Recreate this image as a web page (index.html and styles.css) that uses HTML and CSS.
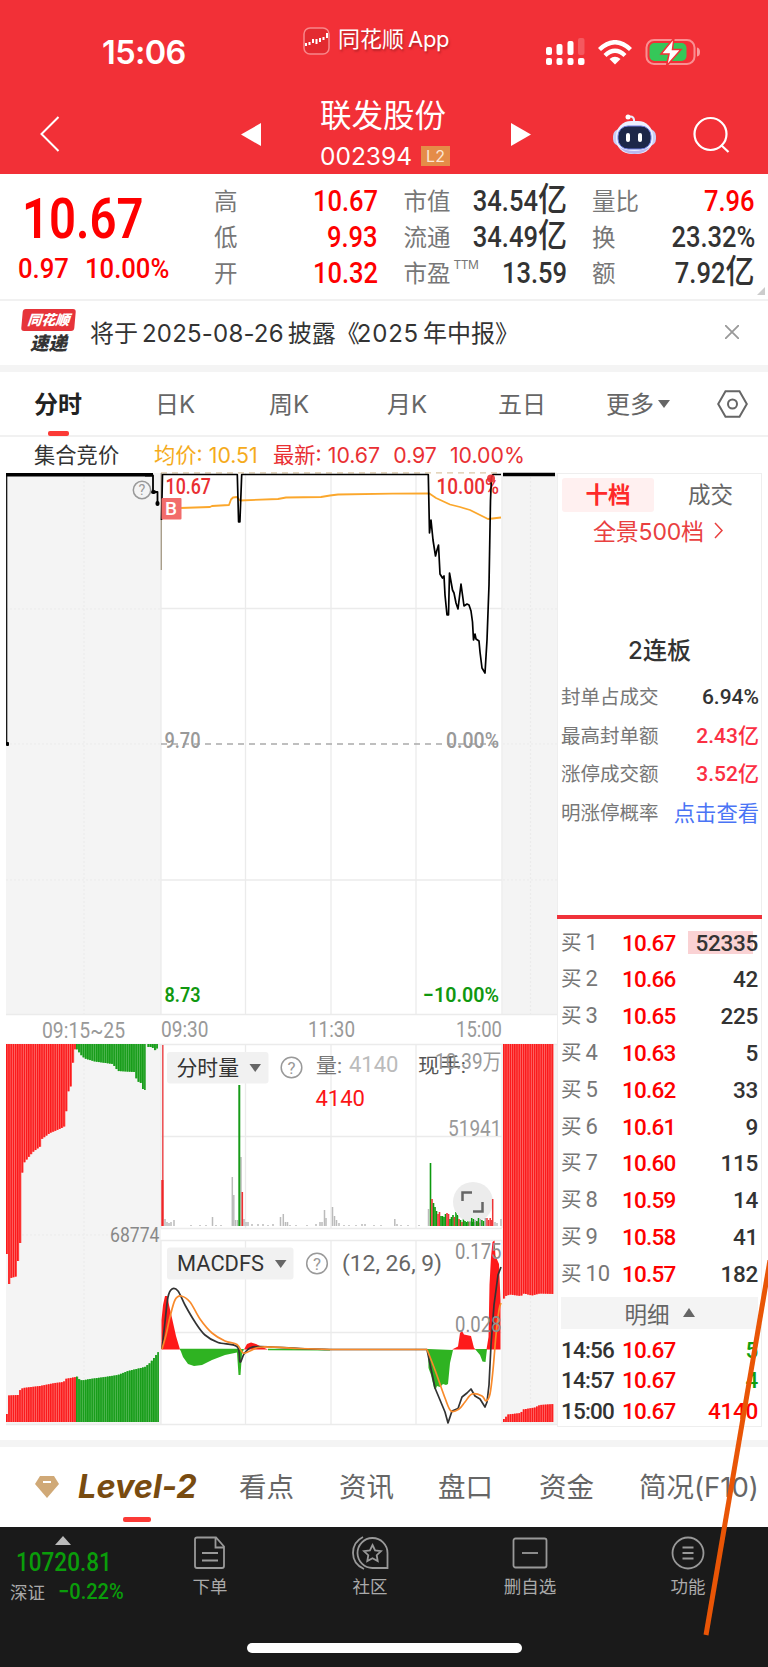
FILE: index.html
```html
<!DOCTYPE html>
<html lang="zh-CN">
<head>
    <meta charset="UTF-8">
    <meta name="viewport" content="width=device-width, initial-scale=1.0">
    <title>联发股份 002394</title>
    <link rel="stylesheet" href="styles.css">
</head>
<body>

    <header class="header">
        <div class="status-bar">
            <span class="time">15:06</span>
            <div class="brand">
                <svg width="27" height="28" viewBox="0 0 27 28"><rect x="1" y="1" width="25" height="26" rx="6" fill="#e32a30" stroke="#f8878a" stroke-width="1.5"/><path d="M3 19v-3M6.500 18v-3M10 16v-4M13.500 12v5M17 15v-4M20.500 13v-3M24 11V6" stroke="#fff" stroke-width="2" fill="none"/></svg>
                <span>同花顺<em>App</em></span>
            </div>
            <div class="status-icons">
                <svg width="39" height="28" viewBox="0 0 39 28" fill="#fff"><rect x="0" y="9" width="6" height="8" rx="2"/><rect x="10.5" y="6" width="6" height="11" rx="2"/><rect x="21.5" y="3" width="6" height="14" rx="2"/><rect x="32" y="0" width="6.5" height="17" rx="2" opacity=".2"/><rect x="0" y="20" width="6" height="7" rx="2"/><rect x="10.5" y="20" width="6" height="7" rx="2"/><rect x="21.5" y="20" width="6" height="7" rx="2"/><rect x="32" y="20" width="6.5" height="7" rx="2"/></svg>
                <svg width="34" height="25" viewBox="0 0 34 25" fill="none" stroke="#fff" stroke-width="4.4"><path d="M1.5 9.5Q17-5 32.500 9.5"/><path d="M7 15.500Q17 6 27 15.500"/><path d="M17 24.500L11.500 19Q17 14.500 22.500 19Z" fill="#fff" stroke="none"/></svg>
                <svg width="56" height="28" viewBox="0 0 56 28"><rect x="1.500" y="2" width="48" height="24" rx="7.500" fill="none" stroke="#fa8f92" stroke-width="2"/><rect x="4.500" y="5" width="37" height="18" rx="5" fill="#35c759"/><path d="M52 9.500q3 .5 3 4.500t-3 4.500z" fill="#fa9b9e"/><path d="M29 0L16 16h8l-2.500 12L36 11.500h-8.500z" fill="#fff" stroke="#f23037" stroke-width="1.500"/></svg>
            </div>
        </div>
        <nav class="stock-nav">
            <svg class="back" width="20" height="36" viewBox="0 0 20 36"><path d="M18.500 1L1.500 18l17 17" fill="none" stroke="#fff" stroke-width="2"/></svg>
            <svg width="20" height="23" viewBox="0 0 20 23"><path d="M20 0v23L0 11.500z" fill="#fff"/></svg>
            <div class="stock-title">
                <h1>联发股份</h1>
                <p><span>002394</span><b>L2</b></p>
            </div>
            <svg width="20" height="23" viewBox="0 0 20 23"><path d="M0 0v23l20-11.500z" fill="#fff"/></svg>
            <svg class="robot" width="43" height="41" viewBox="0 0 43 41">
                <path d="M15 3q7-2 6 6" fill="none" stroke="#e8ebfc" stroke-width="2"/><circle cx="15" cy="3" r="2.500" fill="#fff"/>
                <rect x="0" y="15" width="43" height="17" rx="7" fill="#c9cdf6"/>
                <rect x="3" y="7" width="37" height="33" rx="15" fill="#edf0ff"/>
                <path d="M6 33q15 8 31 0-6 7-15.500 7T6 33z" fill="#b9b9f0"/>
                <rect x="5" y="12" width="33" height="23" rx="10" fill="#1d2748" stroke="#6f7ce0"/>
                <rect x="13" y="19" width="4" height="9" rx="2" fill="#fff"/><rect x="25" y="19" width="4" height="9" rx="2" fill="#fff"/>
            </svg>
            <svg class="search" width="37" height="37" viewBox="0 0 37 37" fill="none" stroke="#fff" stroke-width="2.200"><circle cx="17.500" cy="18" r="16"/><path d="M28 29l7.500 7"/></svg>
        </nav>
    </header>

    <section class="quote">
        <div class="price">
            <div class="last"><span class="din">10.67</span></div>
            <div class="change"><span class="din">0.97</span><span class="din">10.00%</span></div>
        </div>
        <dl class="stats">
            <div><dt>高</dt><dd class="up"><span class="din">10.67</span></dd></div>
            <div><dt>市值</dt><dd><span class="din">34.54<i>亿</i></span></dd></div>
            <div><dt>量比</dt><dd class="up"><span class="din">7.96</span></dd></div>
            <div><dt>低</dt><dd class="up"><span class="din">9.93</span></dd></div>
            <div><dt>流通</dt><dd><span class="din">34.49<i>亿</i></span></dd></div>
            <div><dt>换</dt><dd><span class="din">23.32%</span></dd></div>
            <div><dt>开</dt><dd class="up"><span class="din">10.32</span></dd></div>
            <div><dt>市盈<sup>TTM</sup></dt><dd><span class="din">13.59</span></dd></div>
            <div><dt>额</dt><dd><span class="din">7.92<i>亿</i></span></dd></div>
        </dl>
        <i class="corner"></i>
    </section>

    <section class="news">
        <div class="news-logo">
            <b>同花顺</b>
            <strong>速递</strong>
        </div>
        <p>将于<span>2025-08-26</span>披露《<span class="year">2025</span>年中报》</p>
        <svg width="14" height="14" viewBox="0 0 14 14" stroke="#999" stroke-width="1.800"><path d="M0 0l14 14M14 0L0 14"/></svg>
    </section>

    <nav class="period-tabs">
        <a class="active">分时</a>
        <a>日K</a>
        <a>周K</a>
        <a>月K</a>
        <a>五日</a>
        <a class="more">更多<i></i></a>
        <svg width="31" height="28" viewBox="0 0 31 28" fill="none" stroke="#666" stroke-width="2"><path d="M8.500 1.200h14L29.800 14l-7.300 12.800h-14L1.200 14z"/><circle cx="15.500" cy="14" r="4.500"/></svg>
    </nav>

    <div class="legend">
        <span class="auction">集合竞价</span>
        <span class="avg">均价: 10.51</span>
        <span class="latest">最新: 10.67</span>
        <span class="latest">0.97</span>
        <span class="latest">10.00%</span>
    </div>

    <main class="board">
        <svg id="chart" class="chart" width="557" height="955" viewBox="0 472 557 955"></svg>

        <aside class="side">
            <div class="side-tabs"><b>十档</b><span>成交</span></div>
            <div class="panorama">全景500档<svg width="9" height="17" viewBox="0 0 9 17"><path d="M1 1l7 7.500L1 16" fill="none" stroke="#e9403f" stroke-width="1.500"/></svg></div>
            <h2>2连板</h2>
            <ul class="limit">
                <li>封单占成交<b>6.94%</b></li>
                <li>最高封单额<b class="red">2.43亿</b></li>
                <li>涨停成交额<b class="red">3.52亿</b></li>
                <li>明涨停概率<a>点击查看</a></li>
            </ul>
            <ul class="bids">
                <li><span>买<i>1</i></span><b>10.67</b><em class="hot">52335</em></li>
                <li><span>买<i>2</i></span><b>10.66</b><em>42</em></li>
                <li><span>买<i>3</i></span><b>10.65</b><em>225</em></li>
                <li><span>买<i>4</i></span><b>10.63</b><em>5</em></li>
                <li><span>买<i>5</i></span><b>10.62</b><em>33</em></li>
                <li><span>买<i>6</i></span><b>10.61</b><em>9</em></li>
                <li><span>买<i>7</i></span><b>10.60</b><em>115</em></li>
                <li><span>买<i>8</i></span><b>10.59</b><em>14</em></li>
                <li><span>买<i>9</i></span><b>10.58</b><em>41</em></li>
                <li><span>买<i>10</i></span><b>10.57</b><em>182</em></li>
            </ul>
            <div class="detail">明细<i></i></div>
            <ul class="bids trades">
                <li><span>14:56</span><b>10.67</b><em class="green">5</em></li>
                <li><span>14:57</span><b>10.67</b><em class="green">4</em></li>
                <li><span>15:00</span><b>10.67</b><em class="up">4140</em></li>
            </ul>
        </aside>
    </main>

    <nav class="info-tabs">
        <a class="level2"><svg width="24" height="22" viewBox="0 0 24 22"><path d="M5 0h14l5 8-12 14L0 8z" fill="#d0a977"/><path d="M8 6h8" stroke="#fff" stroke-width="2"/></svg><b>Level-2</b></a>
        <a>看点</a>
        <a>资讯</a>
        <a>盘口</a>
        <a>资金</a>
        <a>简况(F10)</a>
    </nav>

    <footer class="toolbar">
        <div class="index">
            <i></i>
            <strong><span class="din">10720.81</span></strong>
            <p>深证<span class="din">−0.22%</span></p>
        </div>
        <a><svg width="32" height="34" viewBox="0 0 32 34"><path d="M3 1.500h19l8 9V30q0 2-2 2H3q-2 0-2-2V3.500q0-2 2-2zM21.500 2v9.500H30M8 17h16M8 24.500h16"/></svg>下单</a>
        <a><svg width="37" height="34" viewBox="0 0 37 34"><path d="M11 1Q1 6 1 17t11 16M35.500 32H21A15 15 0 1 1 35.500 17z"/><path d="M20.500 9l2.600 5.300 5.900.8-4.300 4.100 1 5.800-5.200-2.800-5.200 2.800 1-5.800-4.300-4.100 5.900-.8z"/></svg>社区</a>
        <a><svg width="36" height="34" viewBox="0 0 36 34"><rect x="1.500" y="2.500" width="33" height="29" rx="2"/><path d="M10 17h16"/></svg>删自选</a>
        <a><svg width="34" height="34" viewBox="0 0 34 34"><circle cx="17" cy="17" r="15.500"/><path d="M11.500 11.500h11M11.500 17h11M11.500 22.500h11"/></svg>功能</a>
        <span class="home-bar"></span>
    </footer>

    <svg class="stroke" width="70" height="380" viewBox="0 0 70 380"><path d="M72 0L8 375" stroke="#e95506" stroke-width="5"/></svg>

    <script src="chart.js"></script>
</body>
</html>
```
FILE: styles.css
```css
*{
    margin: 0;
    padding: 0;
    box-sizing: border-box;
}

body{
    width: 768px;
    height: 1667px;
    position: relative;
    overflow: hidden;
    background: #fff;
    color: #333;
    font-family: Inter, "Noto Sans CJK SC", sans-serif;
}

svg{
    display: block;
    flex-shrink: 0;
}

ul{
    list-style: none;
}

i, em{
    font-style: normal;
}

.din{
    display: inline-block;
    font-family: Roboto, "Noto Sans CJK SC", sans-serif;
    transform: scaleX(.86);
    transform-origin: left;
    white-space: nowrap;
}

.up{
    color: #fe0000;
}

/* header */
.header{
    height: 174px;
    background: #f23037;
    color: #fff;
}

.status-bar{
    height: 94px;
    padding: 0 67px 0 102px;
    display: flex;
}

.time{
    width: 201px;
    padding-top: 32px;
    font-size: 32.500px;
    line-height: 41px;
    font-weight: 600;
    letter-spacing: -.6px;
}

.brand{
    height: 28px;
    margin-top: 27px;
    display: flex;
    align-items: center;
    gap: 8px;
    font-size: 22px;
    line-height: 24px;
    text-shadow: 1px 2px 2px #8c1a1e90;
}

.brand span{
    margin-top: -4px;
}

.brand em{
    margin-left: 4px;
    letter-spacing: -.3px;
}

.status-icons{
    height: 28px;
    margin: 38px 0 0 auto;
    display: flex;
    align-items: center;
    gap: 13px;
}

.stock-nav{
    height: 80px;
    display: grid;
    grid-template-columns: 201px 79px 191px 102px 80px 1fr;
    padding-left: 40px;
    align-items: center;
}

.stock-title{
    height: 80px;
}

.stock-title h1{
    font-size: 31.5px;
    font-weight: 400;
    line-height: 44px;
}

.stock-title p{
    display: flex;
    align-items: center;
    gap: 8px;
    font-size: 24.500px;
    line-height: 36px;
}

.stock-title p span{
    width: 93px;
}

.stock-title p b{
    width: 29px;
    height: 20px;
    background: #e58c48;
    color: #fbe6d5;
    font-size: 16px;
    font-weight: 400;
    line-height: 20px;
    text-align: center;
}

/* quote */
.quote{
    height: 127px;
    display: flex;
    position: relative;
    border-bottom: 2px solid #f1f1f1;
}

.price{
    width: 214px;
    color: #fe0000;
    font-weight: 500;
}

.last{
    padding: 12px 0 0 22px;
    font-size: 55px;
    line-height: 64px;
    font-weight: 600;
}

.change{
    padding-left: 18px;
    display: flex;
    font-size: 28.500px;
    line-height: 36px;
}

.change .din{
    transform: scaleX(.9);
}

.change .din:first-child{
    width: 67px;
}

.stats{
    width: 541px;
    padding-top: 9px;
    display: grid;
    grid-template-columns: 164px 163px 163px;
    grid-auto-rows: 36px;
    column-gap: 25.500px;
}

.stats div{
    display: flex;
    justify-content: space-between;
    line-height: 36px;
}

.stats dt{
    font-size: 23.500px;
    line-height: 38px;
    color: #777;
    white-space: nowrap;
}

.stats dt sup{
    font-size: 12px;
    line-height: 0;
    vertical-align: 13px;
    margin-left: 3px;
    letter-spacing: -.5px;
}

.stats dd{
    font-size: 29px;
    font-weight: 500;
}

.stats dd .din{
    transform: scaleX(.88);
    transform-origin: right;
}

.stats dd i{
    font-size: 33px;
    line-height: 0;
}

.corner{
    position: absolute;
    right: 3px;
    bottom: 4px;
    border-left: 8px solid transparent;
    border-bottom: 8px solid #ccc;
}

/* news */
.news{
    height: 71px;
    padding: 0 29px 3px 22px;
    display: flex;
    align-items: center;
    border-bottom: 7px solid #f4f4f4;
}

.news-logo{
    width: 53px;
    height: 45px;
    margin-right: 15px;
    text-align: center;
    font-style: italic;
}

.news-logo b{
    display: block;
    height: 22px;
    background: #e6343a;
    border-radius: 3px;
    transform: skewX(-5deg);
    color: #fff;
    font-size: 14px;
    line-height: 22px;
    font-weight: 900;
}

.news-logo strong{
    display: block;
    font-size: 18.500px;
    line-height: 24px;
    font-weight: 900;
}

.news p{
    font-size: 24px;
    white-space: nowrap;
}

.news p span{
    margin: 0 4px;
    letter-spacing: .2px;
}

.news p .year{
    margin-left: -3px;
    letter-spacing: .8px;
}

.news svg{
    margin-left: auto;
}

/* period tabs */
.period-tabs{
    height: 65px;
    padding-left: 34px;
    display: grid;
    grid-template-columns: 121px 114px 118px 111px 108px 111px 1fr;
    align-items: center;
    border-bottom: 2px solid #f1f1f1;
    font-size: 24px;
    line-height: 63px;
    color: #666;
}

.period-tabs a{
    padding-top: 1px;
}

.period-tabs .active{
    position: relative;
    color: #222;
    font-weight: 700;
}

.period-tabs .active::after{
    content: "";
    position: absolute;
    left: 14px;
    bottom: 0;
    width: 21px;
    height: 5px;
    border-radius: 2px;
    background: #fb3a36;
}

.more i{
    display: inline-block;
    margin: 0 0 5px 4px;
    border: 6px solid transparent;
    border-top: 8px solid #666;
    border-bottom: 0;
}

.legend{
    height: 35px;
    padding-left: 34px;
    display: flex;
    font-size: 21.300px;
    line-height: 37px;
    white-space: nowrap;
}

.auction{
    width: 120px;
    font-size: 21.300px;
}

.avg{
    width: 119px;
    color: #f5ab1c;
}

.latest{
    color: #e93033;
    margin-right: 13px;
}

/* chart and order book */
.board{
    height: 975px;
    display: flex;
    border-bottom: 7px solid #f4f4f4;
}

.chart{
    font-family: Roboto, "Noto Sans CJK SC", sans-serif;
}

.side{
    width: 205px;
    height: 954px;
    border: 1.500px solid #eee;
    margin-top: 1px;
    display: flex;
    flex-direction: column;
}

.side-tabs{
    padding: 4px;
    display: flex;
    font-size: 22.500px;
    line-height: 34px;
    text-align: center;
    color: #666;
}

.side-tabs b{
    width: 92px;
    flex-shrink: 0;
    border-radius: 3px;
    background: #fff0f0;
    color: #fe2a2a;
}

.side-tabs span{
    width: 113px;
    flex-shrink: 0;
}

.panorama{
    height: 28px;
    padding-left: 35px;
    display: flex;
    align-items: center;
    gap: 10px;
    font-size: 23px;
    color: #e9403f;
    letter-spacing: -.2px;
}

.side h2{
    padding-top: 87px;
    font-size: 24px;
    font-weight: 500;
    line-height: 40px;
    text-align: center;
}

.limit{
    height: 246px;
    padding: 7px 2px 0 3px;
}

.limit li{
    display: flex;
    justify-content: space-between;
    font-size: 19.500px;
    line-height: 38.700px;
    color: #777;
    white-space: nowrap;
}

.limit b{
    font: 500 21px/38.700px Roboto, "Noto Sans CJK SC", sans-serif;
    color: #333;
}

.limit .red{
    color: #fb3044;
}

.limit a{
    font-size: 21.300px;
    color: #4a74f5;
}

.bids{
    margin: 0 -1px;
    padding: 6px 4px 0 4px;
    border-top: 4px solid #f0323a;
    font: 500 22.500px/36.800px Roboto, "Noto Sans CJK SC", sans-serif;
}

.bids li{
    display: grid;
    grid-template-columns: 61px 60px 1fr;
    white-space: nowrap;
}

.bids span{
    font-size: 20.500px;
    font-weight: 400;
    color: #777;
}

.bids span i{
    margin-left: 4px;
    font-size: 22px;
}

.bids b{
    color: #fe0000;
    font-weight: 500;
    letter-spacing: -.8px;
}

.bids em{
    justify-self: end;
    letter-spacing: -.3px;
}

.bids em.hot{
    background: linear-gradient(#fad2d4, #fad2d4) 0 50% / 65px 23px no-repeat;
    padding-left: 8px;
}

.bids .green{
    color: #10a010;
}

.detail{
    height: 32px;
    margin: 4px 3px 0;
    display: flex;
    align-items: center;
    justify-content: center;
    gap: 13px;
    background: #f4f4f4;
    font-size: 22.500px;
    color: #666;
}

.detail i{
    border: 6px solid transparent;
    border-bottom: 9px solid #666;
    border-top: 0;
}

.trades{
    padding-top: 6px;
    border-top: 0;
    line-height: 30.500px;
}

.trades span{
    font-size: 22.500px;
    font-weight: 500;
    color: #333;
    letter-spacing: -.8px;
}

/* bottom */
.info-tabs{
    height: 80px;
    padding-left: 35px;
    display: grid;
    grid-template-columns: 204px 100px 99px 101px 100px 1fr;
    font-size: 27.500px;
    line-height: 80px;
    color: #666;
    white-space: nowrap;
}

.level2{
    position: relative;
    display: flex;
    align-items: center;
    gap: 19px;
}

.level2 b{
    font-size: 32.500px;
    font-style: italic;
    color: #784b10;
}

.level2::after{
    content: "";
    position: absolute;
    left: 88px;
    bottom: 5px;
    width: 28px;
    height: 5px;
    border-radius: 2px;
    background: #fb3a36;
}

.toolbar{
    height: 140px;
    display: grid;
    grid-template-columns: 130px 160px 160px 160px 156px;
    position: relative;
    background: #1a1a1a;
    color: #aaa;
    font-size: 17.500px;
}

.toolbar a{
    padding-top: 9px;
    display: flex;
    flex-direction: column;
    align-items: center;
    line-height: 34px;
}

.toolbar svg{
    fill: none;
    stroke: #999;
    stroke-width: 1.800;
}

.index i{
    display: block;
    width: 0;
    margin: 9px 0 0 55px;
    border: 8px solid transparent;
    border-bottom: 9px solid #bbb;
    border-top: 0;
}

.index strong{
    display: block;
    padding-left: 16px;
    font-size: 25px;
    font-weight: 500;
    line-height: 34px;
    color: #0a9d0a;
}

.index strong .din{
    transform: scaleX(.9);
}

.index p{
    padding-left: 10px;
    line-height: 24px;
    white-space: nowrap;
}

.index p .din{
    margin-left: 13px;
    font-size: 22px;
    font-weight: 500;
    color: #0a9d0a;
    transform: scaleX(.91);
}

.home-bar{
    position: absolute;
    left: 247px;
    bottom: 14px;
    width: 275px;
    height: 10px;
    border-radius: 5px;
    background: #fff;
}

.stroke{
    position: absolute;
    left: 698px;
    top: 1260px;
}
```
FILE: chart.js
```js
var chart = document.getElementById("chart")
var out = []

function line(x1, y1, x2, y2, color, w, dash) {
    out.push(`<path d="M${x1} ${y1}L${x2} ${y2}" stroke="${color}" stroke-width="${w}" stroke-dasharray="${dash || "none"}"/>`)
}

function rect(x, y, w, h, color, r) {
    out.push(`<rect x="${x}" y="${y}" width="${w}" height="${h}" fill="${color}" rx="${r || 0}"/>`)
}

function poly(points, color, w) {
    out.push(`<polyline points="${points}" fill="none" stroke="${color}" stroke-width="${w}" stroke-linejoin="round"/>`)
}

function area(points, color) {
    out.push(`<polygon points="${points}" fill="${color}"/>`)
}

function text(str, x, y, w, size, color, weight) {
    out.push(`<text x="${x}" y="${y}" font-size="${size}" fill="${color}" font-weight="${weight || 400}" textLength="${w}" lengthAdjust="spacingAndGlyphs">${str}</text>`)
}

function help(x, y, r) {
    out.push(`<circle cx="${x}" cy="${y}" r="${r}" fill="none" stroke="#999" stroke-width="1.5"/>`)
    out.push(`<text x="${x}" y="${y + r * .6}" font-size="${r * 1.65}" fill="#999" text-anchor="middle">?</text>`)
}

// smooth curve through the points
function curve(p, color, w) {
    var d = `M${p[0]}`
    for (var i = 0; i < p.length - 1; i++) {
        var a = p[i - 1] || p[i], b = p[i], c = p[i + 1], e = p[i + 2] || c
        d += `C${b[0] + (c[0] - a[0]) / 6} ${b[1] + (c[1] - a[1]) / 6} ${c[0] - (e[0] - b[0]) / 6} ${c[1] - (e[1] - b[1]) / 6} ${c[0]} ${c[1]}`
    }
    out.push(`<path d="${d}" fill="none" stroke="${color}" stroke-width="${w}"/>`)
}

function at(p, x) {
    for (var i = 1; i < p.length; i++) {
        if (x <= p[i][0]) {
            return p[i - 1][1] + (p[i][1] - p[i - 1][1]) * (x - p[i - 1][0]) / (p[i][0] - p[i - 1][0])
        }
    }
    return p[p.length - 1][1]
}

// row of thin bars between a base line and a profile
function bars(from, to, base, profile, color, back) {
    for (var x = from; x < to - .5; x += 2.2) {
        var y = at(profile, x + 1)
        rect(x, Math.min(y, base), Math.min(2.2, to - x), Math.abs(y - base), back)
        rect(x, Math.min(y, base), 1.5, Math.abs(y - base), color)
    }
}

var grid = "#ebebeb"

// backgrounds
rect(6, 473, 155, 542, "#f4f4f4")
rect(502.5, 473, 55, 542, "#f4f4f4")
rect(6, 1044, 155, 381, "#f4f4f4")
rect(502.5, 1044, 55, 381, "#f4f4f4")

// grid
for (var x of [84, 530.5]) {
    line(x, 473, x, 1014, grid, 1.2, "2 2")
    line(x, 1045, x, 1424, grid, 1.2, "2 2")
}
for (var y of [609, 744, 880]) {
    line(6, y, 161, y, grid, 1, "2 2")
    line(503, y, 557, y, grid, 1, "2 2")
}
line(6, 1235, 161, 1235, grid, 1, "2 2")
for (var x of [161, 245.5, 331, 416, 502]) {
    line(x, 473, x, 1014, grid, 1.3)
    line(x, 1045, x, 1228, grid, 1.3)
    line(x, 1240, x, 1424, grid, 1.3)
}
for (var y of [608.5, 880, 1136.5, 1228.5, 1240.5, 1332.5]) {
    line(161, y, 502, y, grid, 1.3)
}
for (var y of [1014.5, 1044.5, 1424.5]) {
    line(6, y, 557, y, grid, 1.3)
}
line(161, 744, 502, 744, "#aaa", 1.3, "6 5")
line(161, 472.8, 502, 472.8, "#dcc7a6", 1.2, "6 5")

// call auction
line(6, 474.7, 153, 474.7, "#000", 3.5)
line(6.7, 474, 6.7, 744, "#000", 1.2)
rect(6, 742, 3, 4, "#000", 1)
poly("145,475.500 153,475.500 153,492 157.500,492 157.500,503", "#000", 1.8)
rect(151, 490, 5, 4, "#000", 2)
rect(155.5, 501, 4, 5, "#000", 2)
help(142, 490, 8.7)
line(503, 474.5, 555, 474.5, "#000", 3.5)

// intraday
line(161.3, 473, 161.3, 570, "#a59a85", 1.3)
poly("162.500,511 180,508 210,507 212,506 229,505 231,499.500 233,497.500 237,497 240,500.500 278,499 286,497.500 321,497 330,495.500 338,494.500 392,493.700 429,493.300 436,498 450,504.500 460,507 470,510 488,519 501,517.500", "#fba72c", 1.8)
text("10.67", 165.5, 493.5, 45.5, 21.5, "#e92f32", 500)
text("10.00%", 436.5, 493.5, 62.5, 21.5, "#e92f32", 500)
poly("161.500,520 162.500,474.500 237.300,474.500 238.600,522 239.900,522 241.700,474.500 428.300,474.500 429.500,533 431,520 433,540 435.500,556 437,550 438.500,545 440,574 442.500,578 444,576 445,595 447,615 448.500,615 449.500,573 452.500,590 454,593 456,603 458,609 461,584 464,606 467,604 469,605 471,611 472.500,622 473.500,640 475,634 476,639 479,641 480,652 482,668 485,673 487,640 489,585 490.500,500 491.500,477 493,474.500 501,474.500", "#000", 1.7)
out.push(`<circle cx="491" cy="478.500" r="4" fill="#e92f32" opacity=".9"/>`)
rect(161.5, 498, 20, 21.5, "#f26c6b", 1)
text("B", 165, 515, 12, 18, "#fff", 500)
text("9.70", 164.5, 748, 36, 21.5, "#999", 500)
text("0.00%", 446, 748, 53, 21.5, "#999", 500)
text("8.73", 164.5, 1002, 36, 21, "#10980f", 600)
text("−10.00%", 423, 1002, 76, 21, "#10980f", 600)
text("09:15~25", 42, 1038, 83, 22, "#999")
text("09:30", 161, 1036.5, 47.5, 22, "#999")
text("11:30", 308, 1036.5, 47, 22, "#999")
text("15:00", 456, 1036.5, 46, 22, "#999")

// auction volume
var red = "#fb1a1c", pink = "#ff6b67", green = "#189c1a", lime = "#45b546"
bars(6, 76, 1044, [[6, 1254], [8, 1254], [8.1, 1284], [10, 1284], [11, 1278], [16, 1276.5], [17, 1261], [19, 1261], [20, 1243], [21, 1243], [22, 1175], [24, 1163], [28, 1158], [33, 1152], [41, 1146], [42, 1139], [50, 1133], [55, 1131], [64, 1127], [66, 1122], [67, 1095], [70, 1088], [72, 1084], [73.5, 1052], [76, 1048]], red, pink)
bars(76, 145, 1044, [[76, 1048], [79, 1052], [82, 1056], [85, 1058.5], [95, 1061.5], [113, 1064], [118, 1071], [135, 1072], [137, 1081], [141, 1083], [143, 1089], [145, 1090]], green, lime)
bars(147.5, 158, 1044, [[147, 1047], [152, 1047], [154, 1049], [156, 1051], [158, 1047]], green, lime)
bars(6, 76, 1422, [[6, 1414], [7.5, 1414], [8, 1395.5], [18, 1395], [19, 1391], [23, 1388], [40, 1386], [55, 1383], [64, 1382], [65, 1379], [76, 1377]], red, pink)
bars(76, 158.5, 1422, [[76, 1375.5], [79, 1379], [82, 1380.5], [90, 1379], [105, 1377], [118, 1375], [128, 1371], [145, 1367], [150, 1363], [154, 1358], [158.5, 1352]], green, lime)
bars(503, 554, 1044, [[503, 1299], [505, 1298], [506, 1296], [510, 1294.5], [521, 1296], [524, 1293.5], [532, 1295.5], [540, 1293.5], [554, 1294]], red, pink)
bars(503, 554, 1422, [[503, 1420], [506, 1417], [508, 1414.5], [521, 1413], [523, 1409.5], [535, 1407.5], [540, 1405], [554, 1404]], red, pink)
text("68774", 110, 1242, 49.5, 19.5, "#888")

// volume
line(162.8, 1045, 162.8, 1226, "#ed5558", 1.6)
rect(161.3, 1180, 2.2, 46, "#ef2527")
var vol = [[165, 7], [167, 4], [169, 3], [171, 4], [174, 6], [191, 1], [200, 1], [206, 1], [212.5, 9], [216, 1], [221, 1], [232.3, 49], [233.8, 31], [235.5, 6], [237.5, 6], [241, 69], [244, 7], [246, 4], [248, 4], [252, 2], [258, 2], [263, 2], [268, 1], [273, 2], [280.5, 9], [283.3, 12], [285.5, 4], [287.5, 4], [290, 1], [296, 1], [307, 1], [316, 2], [320, 4], [322, 4], [324.5, 16], [326, 8], [332.5, 19], [334.5, 10], [336.5, 6], [339, 3], [344, 1], [349, 1], [356, 1], [362, 2], [365, 2], [374, 1], [381, 1], [394.8, 7], [397, 2], [401, 1], [408, 1], [419, 1], [428.5, 17], [495, 4], [497, 3], [501, 7]]
vol.forEach(v => line(v[0], 1226, v[0], 1226 - v[1], "#bbb", 1.5))
line(239.3, 1226, 239.3, 1085, "#169b18", 2)
line(242.3, 1226, 242.3, 1192, "#ef3033", 1.6)
var tail = [63, 27, 23, 19, 15, 12, 14, 10, 10, 9, 12, 13, 12, 7, 9, 11, 9, 14, 11, 7, 6, 4, 14, 5, 4, 6, 4, 4, 6, 6, 4, 10, 4, 3]
tail.forEach((h, i) => rect(429.7 + i * 1.5, 1226 - h, 1.6, h, i % 5 == 1 || i % 7 == 5 ? "#ee3436" : "#0c990e"))
out.push(`<circle cx="473" cy="1202" r="20" fill="#ececec"/>`)
out.push(`<path d="M462.500 1201V1192.500H472M482.500 1202V1211.500H473" fill="none" stroke="#666" stroke-width="2.500"/>`)
for (var i = 0; i < 10; i++) {
    line(470 + i * 1.7, 1226, 470 + i * 1.7, 1221 - (i * 3) % 4, i % 3 ? "#0c990e" : "#aaa", 1.5)
}
for (var i = 0; i < 4; i++) {
    line(487 + i * 1.6, 1226, 487 + i * 1.6, 1218 + i % 2 * 2, "#ee3436", 1.5)
}
line(492.7, 1226, 492.7, 1199, "#ee3436", 1.5)

rect(167, 1052, 101.5, 31.5, "#f1f1f1", 3)
text("分时量", 176.5, 1075, 62.5, 21, "#333")
area("249.500,1064 261,1064 255.200,1072", "#666")
help(291.5, 1067.5, 10.3)
text("量:", 316, 1072.5, 26, 20, "#777")
text("4140", 349, 1072, 49.5, 22, "#bbb")
text("现手:", 418, 1072.5, 48, 20, "#555")
text("10.39万", 435, 1069, 66.5, 22, "#999")
text("4140", 315.5, 1106, 49.5, 22, "#fb1416")
text("51941", 448, 1135.5, 53.5, 22, "#999")

// macd
var zero = 1349.5
area("161.500,1349.500 161.500,1320 163,1305 165,1296 167.500,1296 169,1305 172,1318 176,1336 180,1349.500", "#fe1a1a")
area("180,1349 183,1357 188,1364 194,1366 202,1365 212,1360 225,1355 237,1352.500 238.500,1375 240.500,1375 242,1354 244,1349", "#2fb322")
area("244,1349.500 247,1344 251,1342.500 256,1344 262,1347 268,1349.500", "#fe1a1a")
line(180, zero, 241, zero, "#2fb322", 1.5)
line(268, zero, 330, zero + .3, "#2fb322", 1.5)
area("428,1349 428.500,1368 431,1375 434,1388 435.500,1390 437,1386 440,1387 443,1384 446,1385 448,1384 450,1363 453,1350", "#2fb322")
area("452,1349.500 458,1346.500 460,1333 462,1331 464,1334.500 471,1336 474,1348 476,1349.500", "#fe1a1a")
area("475,1349 480,1355 482.500,1361.500 485.500,1362 487,1349", "#2fb322")
area("486.500,1349.500 488.500,1337 489.500,1285 491,1257 492.500,1242 494.500,1240.500 495.500,1256 499,1264 500.500,1300 500.500,1349.500", "#fe1a1a")
curve([[162, 1349], [165, 1322], [168, 1297], [172, 1289], [178, 1291], [185, 1305], [195, 1322], [205, 1335], [218, 1342.5], [237, 1346.5], [240, 1362], [244, 1354], [250, 1348], [260, 1346.5], [300, 1348.5], [330, 1349.5]], "#333", 1.7)
poly("330,1349.500 427,1349.500 430,1364 435,1388 440,1400 445,1412 448,1423 452,1411 458,1408.500 462,1397 467,1393 471,1389 475,1396 480,1399 485,1407 487,1402 489,1385 491,1345 494,1305 498,1275 501,1267", "#333", 1.7)
curve([[162, 1349], [166, 1335], [170, 1317], [175, 1300], [181, 1296], [190, 1302], [200, 1319], [212, 1333], [225, 1341], [237, 1344.5], [243, 1353], [250, 1351], [262, 1347], [300, 1348.5], [330, 1349.5]], "#f88a2b", 1.7)
line(330, zero, 427, zero, "#f88a2b", 1.7)
curve([[427, 1349.5], [435, 1370], [445, 1398], [451, 1411], [459, 1409], [465, 1402], [472, 1394], [482, 1396], [486, 1401], [490, 1394], [493, 1370], [496, 1335], [499, 1310], [501, 1303]], "#f88a2b", 1.7)
rect(167, 1247.5, 126.5, 32, "#f1f1f1", 3)
text("MACDFS", 177, 1271, 87, 22, "#333")
area("275,1260 286.500,1260 280.700,1268", "#666")
help(317, 1263.5, 10.3)
text("(12, 26, 9)", 342, 1271, 100, 22, "#666")
text("0.175", 455, 1258.5, 46.5, 22, "#8f8f8f")
text("0.028", 455, 1331.500, 46.5, 22, "#8f8f8f")

chart.innerHTML = out.join("")
```
